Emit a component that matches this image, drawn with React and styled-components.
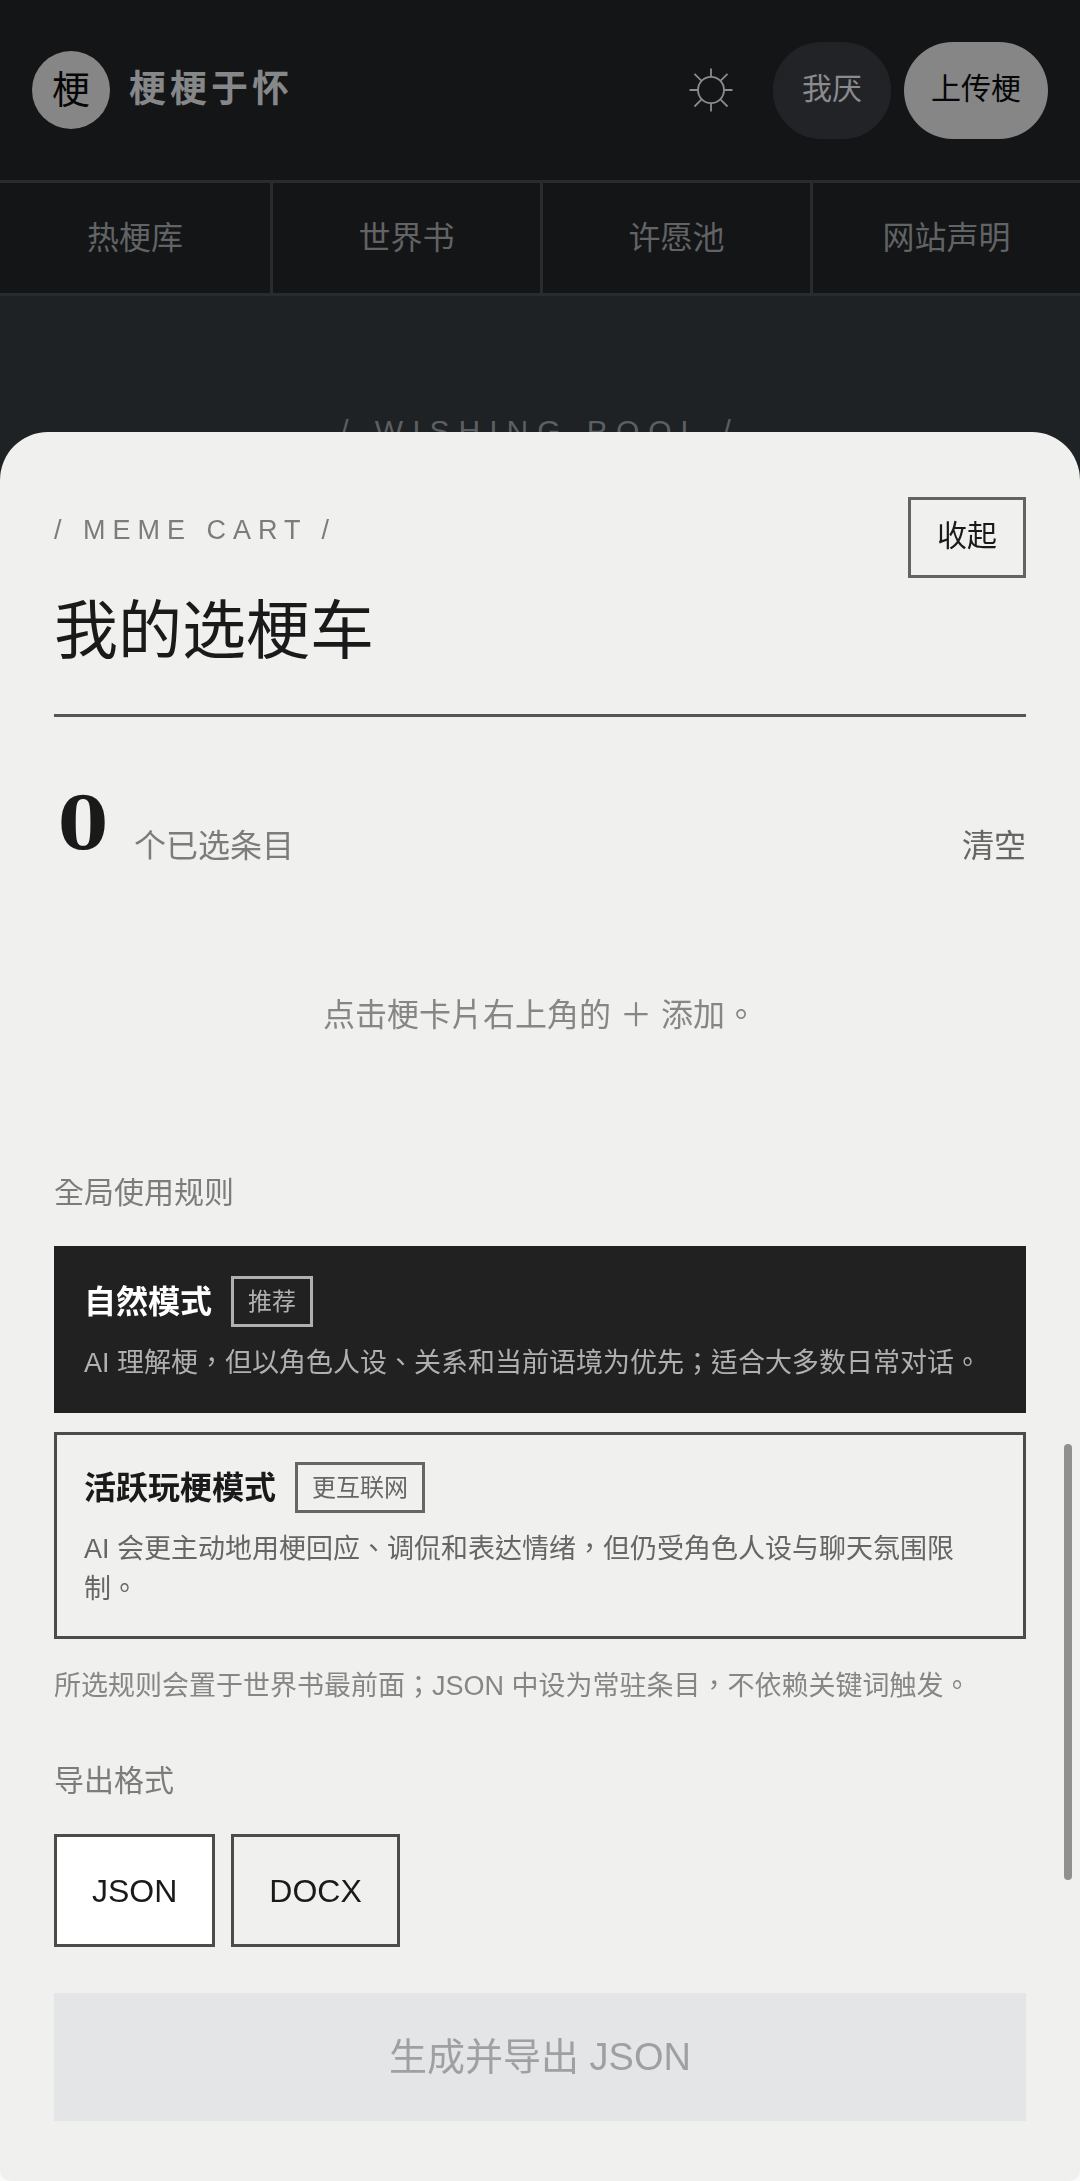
import React, { useState } from 'react';
import styled, { createGlobalStyle } from 'styled-components';

const NAV_ITEMS = ['热梗库', '世界书', '许愿池', '网站声明'];

const MODES = [
  {
    id: 'natural',
    name: '自然模式',
    tag: '推荐',
    desc: 'AI 理解梗，但以角色人设、关系和当前语境为优先；适合大多数日常对话。',
  },
  {
    id: 'active',
    name: '活跃玩梗模式',
    tag: '更互联网',
    desc: 'AI 会更主动地用梗回应、调侃和表达情绪，但仍受角色人设与聊天氛围限制。',
  },
];

const FORMATS = ['JSON', 'DOCX'];

const SunIcon = () => (
  <svg width="44" height="44" viewBox="0 0 44 44" fill="none" stroke="currentColor" strokeWidth="1.8">
    <ellipse cx="22" cy="22" rx="13" ry="13.2" />
    <path d="M22 0.5V9M22 35V43.5M0.5 22H9M35 22H43.5M5.5 5.8L12.3 12.6M31.7 12.6L38.5 5.8M5.5 38.5L12.3 31.7M31.7 31.7L38.5 38.5" />
  </svg>
);

const App = () => {
  const [mode, setMode] = useState('natural');
  const [format, setFormat] = useState('JSON');

  return (
    <Page>
      <GlobalStyle />
      <Header>
        <Brand href="#">
          <Logo>梗</Logo>
          <BrandName>梗梗于怀</BrandName>
        </Brand>
        <Actions>
          <ThemeButton type="button" aria-label="切换主题">
            <SunIcon />
          </ThemeButton>
          <PillButton type="button">我厌</PillButton>
          <PillButton type="button" $light>上传梗</PillButton>
        </Actions>
      </Header>
      <Nav>
        {NAV_ITEMS.map((item) => (
          <NavLink key={item} href="#">{item}</NavLink>
        ))}
      </Nav>
      <Hero>/ WISHING POOL /</Hero>

      <Sheet>
        <SheetHeader>
          <div>
            <Eyebrow>/ MEME CART /</Eyebrow>
            <Title>我的选梗车</Title>
          </div>
          <CloseButton type="button">收起</CloseButton>
        </SheetHeader>

        <CountRow>
          <Count>0</Count>
          <CountLabel>个已选条目</CountLabel>
          <ClearButton type="button">清空</ClearButton>
        </CountRow>

        <EmptyHint>点击梗卡片右上角的 ＋ 添加。</EmptyHint>

        <SectionLabel>全局使用规则</SectionLabel>
        <ModeList>
          {MODES.map((item) => (
            <ModeCard
              key={item.id}
              type="button"
              aria-pressed={mode === item.id}
              $active={mode === item.id}
              onClick={() => setMode(item.id)}
            >
              <ModeHead>
                <ModeName>{item.name}</ModeName>
                <ModeTag>{item.tag}</ModeTag>
              </ModeHead>
              <ModeDesc>{item.desc}</ModeDesc>
            </ModeCard>
          ))}
        </ModeList>
        <Note>所选规则会置于世界书最前面；JSON 中设为常驻条目，不依赖关键词触发。</Note>

        <SectionLabel>导出格式</SectionLabel>
        <FormatList>
          {FORMATS.map((item) => (
            <FormatButton
              key={item}
              type="button"
              aria-pressed={format === item}
              $active={format === item}
              onClick={() => setFormat(item)}
            >
              {item}
            </FormatButton>
          ))}
        </FormatList>

        <ExportButton type="button" disabled>生成并导出 {format}</ExportButton>
      </Sheet>
      <ScrollThumb />
    </Page>
  );
};

const GlobalStyle = createGlobalStyle`
  * {
    box-sizing: border-box;
  }

  body {
    margin: 0;
    background: #fafafa;
    font-family: 'Liberation Sans', 'Noto Sans CJK TC', sans-serif;
    line-height: 48px;
  }

  h2, p {
    margin: 0;
    font-weight: 400;
  }

  button {
    margin: 0;
    font-family: inherit;
    line-height: inherit;
    border: none;
    background: none;
    cursor: pointer;
  }

  a {
    color: inherit;
    text-decoration: none;
  }
`;

const Page = styled.div`
  min-height: 100vh;
`;

const Header = styled.header`
  display: flex;
  align-items: center;
  justify-content: space-between;
  height: 180px;
  padding: 0 32px;
  background: #141517;
`;

const Brand = styled.a`
  display: flex;
  align-items: center;
  gap: 19px;
`;

const Logo = styled.span`
  display: flex;
  align-items: center;
  justify-content: center;
  width: 78px;
  height: 78px;
  border-radius: 50%;
  background: #868686;
  color: #060606;
  font-size: 38px;
`;

const BrandName = styled.span`
  color: #868789;
  font-size: 37px;
  font-weight: 700;
  letter-spacing: 4px;
`;

const Actions = styled.div`
  display: flex;
  align-items: center;
  gap: 13px;
`;

const ThemeButton = styled.button`
  display: flex;
  margin-right: 27px;
  padding: 0;
  color: #8a8b8c;
`;

const PillButton = styled.button`
  height: 97px;
  padding: 0 27px 3px;
  border: ${(props) => (props.$light ? 'none' : '2px solid #222327')};
  border-radius: 49px;
  background: ${(props) => (props.$light ? '#868686' : '#222327')};
  color: ${(props) => (props.$light ? '#060606' : '#8a8b8c')};
  font-size: 30px;
`;

const Nav = styled.nav`
  display: grid;
  grid-template-columns: repeat(4, 1fr);
  border-top: 3px solid #2a2b2d;
  border-bottom: 3px solid #2a2b2d;
  background: #141517;
`;

const NavLink = styled.a`
  display: flex;
  align-items: center;
  justify-content: center;
  height: 110px;
  color: #626365;
  font-size: 32px;

  & + & {
    border-left: 3px solid #2a2b2d;
  }
`;

const Hero = styled.div`
  height: 240px;
  padding-top: 115px;
  background: #1e2224;
  color: #5c5f61;
  font-size: 30px;
  line-height: 40px;
  letter-spacing: 9px;
  text-align: center;
`;

const Sheet = styled.section`
  position: fixed;
  right: 0;
  bottom: 0;
  left: 0;
  max-height: 94vh;
  padding: 65px 54px 60px;
  overflow-y: auto;
  border-radius: 48px 48px 10px 10px;
  background: #f0f0ee;
  color: #1a1a1a;
`;

const SheetHeader = styled.div`
  display: flex;
  align-items: flex-start;
  justify-content: space-between;
  padding-bottom: 42px;
  border-bottom: 3px solid #555654;
`;

const Eyebrow = styled.p`
  padding-top: 13px;
  color: #7c7c7b;
  font-size: 27px;
  line-height: 40px;
  letter-spacing: 7px;
`;

const Title = styled.h2`
  margin-top: 40px;
  font-size: 64px;
  line-height: 82px;
`;

const CloseButton = styled.button`
  height: 81px;
  padding: 0 26px 4px;
  border: 3px solid #636362;
  color: #1a1a1a;
  font-size: 30px;
`;

const CountRow = styled.div`
  display: flex;
  align-items: flex-end;
  margin-top: 61px;
`;

const Count = styled.strong`
  min-width: 58px;
  margin-right: 22px;
  font-family: 'DejaVu Serif', serif;
  font-size: 72px;
  font-weight: 700;
  line-height: 92px;
  text-align: center;
`;

const CountLabel = styled.span`
  color: #7c7c7b;
  font-size: 32px;
`;

const ClearButton = styled.button`
  margin-left: auto;
  padding: 0;
  color: #666665;
  font-size: 32px;
`;

const EmptyHint = styled.p`
  margin: 121px 0 132px;
  color: #868685;
  font-size: 32px;
  text-align: center;
`;

const SectionLabel = styled.p`
  margin-bottom: 31px;
  color: #7c7c7b;
  font-size: 30px;
  line-height: 44px;
`;

const ModeList = styled.div`
  display: flex;
  flex-direction: column;
  gap: 19px;
`;

const ModeTag = styled.span`
  padding: 0 14px;
  border: 3px solid currentColor;
  font-size: 24px;
  line-height: 45px;
`;

const ModeDesc = styled.span`
  display: block;
  margin-top: 16px;
  font-size: 27px;
  line-height: 40px;
`;

const ModeCard = styled.button`
  padding: 27px;
  border: 3px solid ${(props) => (props.$active ? '#212121' : '#4c4d4b')};
  background: ${(props) => (props.$active ? '#212121' : 'transparent')};
  color: ${(props) => (props.$active ? '#ffffff' : '#1a1a1a')};
  text-align: left;

  ${ModeTag}, ${ModeDesc} {
    color: ${(props) => (props.$active ? '#b0b0b0' : '#666665')};
  }
`;

const ModeHead = styled.span`
  display: flex;
  align-items: center;
  gap: 19px;
`;

const ModeName = styled.span`
  font-size: 32px;
  font-weight: 700;
`;

const Note = styled.p`
  margin: 27px 0 53px;
  color: #868685;
  font-size: 27px;
  line-height: 40px;
`;

const FormatList = styled.div`
  display: flex;
  gap: 16px;
`;

const FormatButton = styled.button`
  height: 113px;
  padding: 0 35px;
  border: 3px solid #4c4d4b;
  background: ${(props) => (props.$active ? '#ffffff' : 'transparent')};
  color: #1a1a1a;
  font-size: 32px;
`;

const ExportButton = styled.button`
  width: 100%;
  height: 128px;
  margin-top: 46px;
  background: #e4e5e7;
  color: #9fa0a1;
  font-size: 38px;
  cursor: default;
`;

const ScrollThumb = styled.div`
  position: fixed;
  right: 8px;
  bottom: 301px;
  width: 8px;
  height: 20vh;
  border-radius: 4px;
  background: #90908f;
`;

export default App;
